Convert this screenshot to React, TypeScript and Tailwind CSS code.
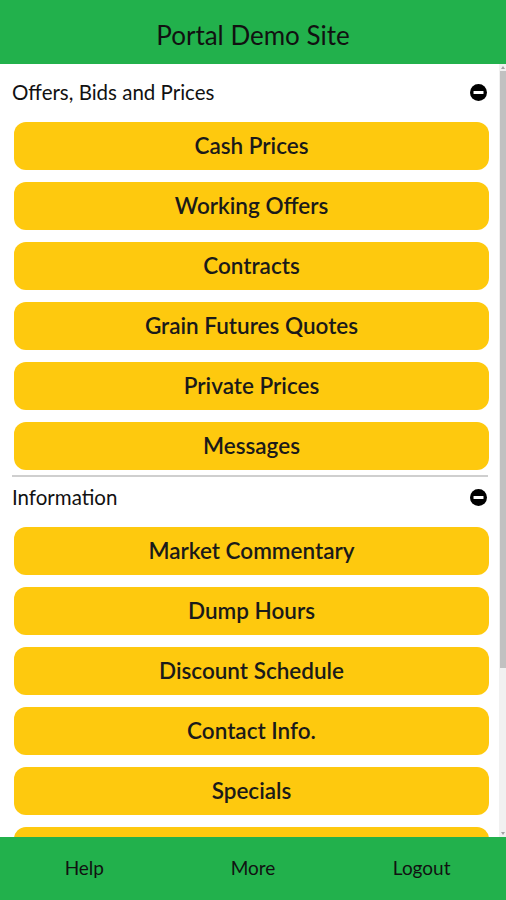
import React from "react";

const section1 = ["Cash Prices", "Working Offers", "Contracts", "Grain Futures Quotes", "Private Prices", "Messages"];
const section2 = ["Market Commentary", "Dump Hours", "Discount Schedule", "Contact Info.", "Specials", ""];

function MinusIcon() {
  return (
    <svg width="17" height="17" viewBox="0 0 17 17">
      <circle cx="8.5" cy="8.5" r="8.5" fill="#000" />
      <rect x="3.5" y="7" width="10" height="3" rx="0.5" fill="#fff" />
    </svg>
  );
}

function SectionHeader({ title }: { title: string }) {
  return (
    <div className="flex h-[40px] shrink-0 items-center justify-between pl-[12px] pr-[12px]">
      <span className="text-[20.5px] text-[#111]">{title}</span>
      <MinusIcon />
    </div>
  );
}

function Btn({ label }: { label: string }) {
  return (
    <div className="flex h-[48px] shrink-0 items-center justify-center rounded-[12px] bg-[#fec90e] text-[22.5px] font-semibold text-[#1a1a1a]">
      {label}
    </div>
  );
}

export default function App() {
  return (
    <div
      className="flex h-[900px] w-[506px] flex-col overflow-hidden bg-white"
      style={{ fontFamily: "Lato, 'Noto Sans', sans-serif" }}
    >
      <header className="flex h-[64px] shrink-0 items-center justify-center bg-[#22b14c] pt-[6px]">
        <span className="text-[26px] text-[#111]">Portal Demo Site</span>
      </header>
      <div className="flex min-h-0 flex-1">
        <main className="flex min-w-0 flex-1 flex-col overflow-hidden pt-[8px]">
          <SectionHeader title="Offers, Bids and Prices" />
          <div className="mt-[10px] flex shrink-0 flex-col gap-[12px] pl-[14px] pr-[10px]">
            {section1.map((l) => (
              <Btn key={l} label={l} />
            ))}
          </div>
          <div className="ml-[12px] mr-[11px] mt-[5px] h-[2px] shrink-0 bg-[#cfcfcf]" />
          <SectionHeader title="Information" />
          <div className="mt-[10px] flex shrink-0 flex-col gap-[12px] pl-[14px] pr-[10px]">
            {section2.map((l, i) => (
              <Btn key={i} label={l} />
            ))}
          </div>
        </main>
        <div className="flex w-[7px] shrink-0 flex-col items-center bg-[#f1f1f1]">
          <div className="mt-[2px] h-0 w-0 border-x-[2px] border-b-[3px] border-x-transparent border-b-[#a3a3a3]" />
          <div className="mt-[2px] h-[597px] w-[6px] bg-[#c1c1c1]" />
          <div className="flex-1" />
          <div className="mb-[2px] h-0 w-0 border-x-[2px] border-t-[3px] border-x-transparent border-t-[#a3a3a3]" />
        </div>
      </div>
      <footer className="grid h-[63px] shrink-0 grid-cols-3 items-center bg-[#22b14c] text-[19px] text-[#111]">
        <span className="text-center">Help</span>
        <span className="text-center">More</span>
        <span className="text-center">Logout</span>
      </footer>
    </div>
  );
}
